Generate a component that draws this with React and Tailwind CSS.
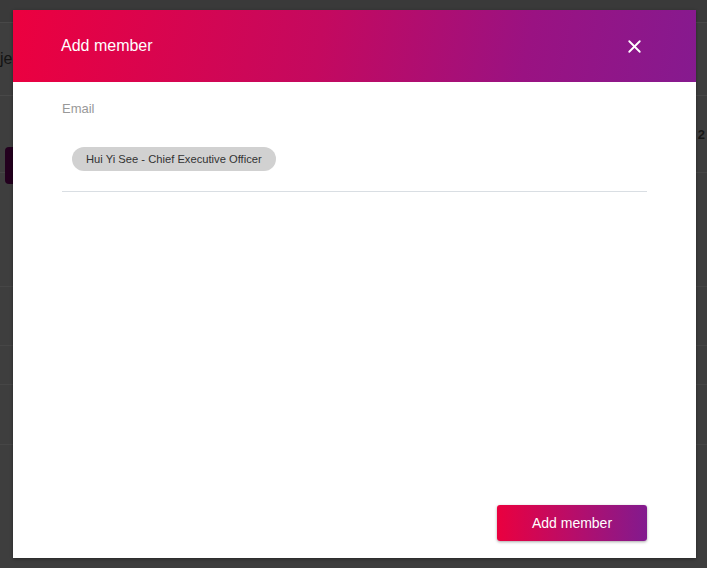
import { X } from "lucide-react";

const BackdropPage = () => (
  <div className="flex h-[568px] w-[707px] flex-col overflow-hidden bg-[#3e3e3e]">
    <div className="h-[23px] shrink-0 border-b border-[#484848] bg-[#3a3a3a]" />
    <div className="flex h-[73px] shrink-0 items-center border-b border-[#484848]">
      <span className="text-[16px] text-[#141414]">je</span>
    </div>
    <div className="flex h-[77px] shrink-0 items-end border-b border-[#474747] pb-0">
      <div className="ml-[5px] h-[37px] w-[40px] translate-y-[12px] rounded-sm bg-[#23001e]" />
    </div>
    <div className="flex flex-1 flex-col">
      <div className="flex h-[114px] items-start justify-end border-b border-[#464646] pr-[2px] pt-0">
        <span className="-mt-[48px] text-[13px] font-bold text-[#161616]">2</span>
      </div>
      <div className="h-[59px] border-b border-[#464646]" />
      <div className="h-[39px] border-b border-[#464646]" />
      <div className="h-[60px] border-b border-[#464646]" />
      <div className="flex-1" />
    </div>
  </div>
);

export default function App() {
  return (
    <div
      className="relative h-[568px] w-[707px] overflow-hidden"
      style={{ fontFamily: '"Liberation Sans", Arial, sans-serif' }}
    >
      <BackdropPage />

      {/* Modal */}
      <div className="absolute left-[13px] top-[10px] flex h-[548px] w-[683px] flex-col bg-white shadow-[0_1px_3px_rgba(0,0,0,0.4)]">
        <div className="flex h-[72px] shrink-0 items-center justify-between bg-[linear-gradient(100deg,#ec003f_0%,#c4095f_45%,#9a1282_75%,#861a8f_100%)] pl-[48px] pr-[51px]">
          <h2 className="text-[16px] text-white">Add member</h2>
          <button className="text-white">
            <X className="h-[21px] w-[21px]" strokeWidth={2.1} />
          </button>
        </div>

        <div className="flex flex-1 flex-col px-[49px] pt-[19px]">
          <label className="text-[13px] leading-[16px] text-[#999999]">Email</label>
          <div className="flex border-b border-[#d9dee3] pb-[20px] pl-[10px] pt-[30px]">
            <span className="flex h-[24px] items-center rounded-full bg-[#d1d1d1] px-[14px] text-[11.2px] text-[#333333]">
              Hui Yi See - Chief Executive Officer
            </span>
          </div>
          <div className="flex-1" />
          <div className="flex justify-end pb-[17px]">
            <button className="h-[36px] w-[150px] rounded-[3px] bg-[linear-gradient(90deg,#ea003f_0%,#b80d69_50%,#821a8e_100%)] text-[14px] text-white shadow-[0_1px_3px_rgba(0,0,0,0.35)]">
              Add member
            </button>
          </div>
        </div>
      </div>
    </div>
  );
}
